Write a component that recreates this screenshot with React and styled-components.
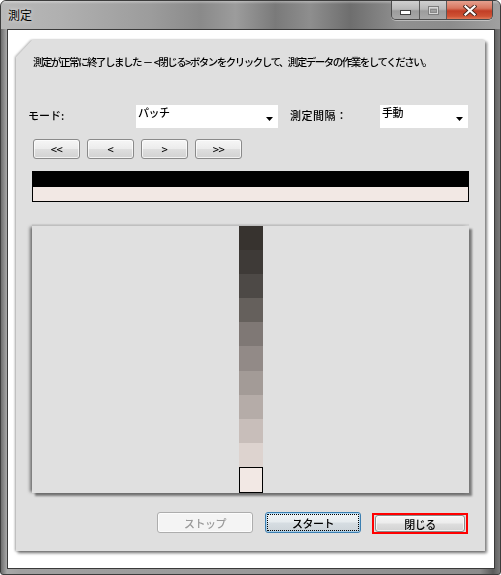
import React from 'react';
import styled, { createGlobalStyle, css } from 'styled-components';

const Global = createGlobalStyle`
  html, body { margin: 0; padding: 0; background: #fff; }
  body {
    width: 501px; height: 575px; overflow: hidden;
    font-family: "Noto Sans CJK JP", "Noto Sans", sans-serif;
    color: #000;
  }
  * { box-sizing: border-box; }
`;

const Window = styled.div`
  width: 501px;
  height: 575px;
  display: flex;
  flex-direction: column;
  border: 1px solid #3c3c3c;
  border-radius: 6px 6px 3px 3px;
  overflow: hidden;
  background: linear-gradient(90deg, #6e6e6e 0, #a9a9a9 1.2%, #a0a0a0 4%, #9a9a9a 50%, #8c8c8c 96%, #5a5a5a 98.6%, #7a7a7a 100%);
`;

const TitleBar = styled.div`
  height: 28px;
  flex: none;
  display: flex;
  align-items: flex-start;
  background:
    linear-gradient(180deg, rgba(255,255,255,0.35) 0, rgba(255,255,255,0) 3px),
    linear-gradient(90deg, #b9b9b9 0%, #b0b0b0 12%, #9c9c9c 30%, #8a8a8a 40%, #9c9c9c 47%, #7a7a7a 55%, #8e8e8e 62%, #6e6e6e 70%, #909090 80%, #8c8c8c 90%, #a0a0a0 100%);
`;

const Title = styled.div`
  padding: 6px 0 0 7px;
  font-size: 12px;
  line-height: 16px;
  color: #000;
  text-shadow: 0 0 4px rgba(255,255,255,0.8);
`;

const Controls = styled.div`
  margin-left: auto;
  margin-right: 7px;
  display: flex;
  height: 19px;
  border: 1px solid #4b4b4b;
  border-top: none;
  border-radius: 0 0 5px 5px;
  overflow: hidden;
  box-shadow: 0 1px 0 rgba(255,255,255,0.4);
`;

const CtrlBtn = styled.div`
  width: ${p => p.$w}px;
  height: 100%;
  display: flex;
  align-items: center;
  justify-content: center;
  border-left: ${p => (p.$first ? 'none' : '1px solid #5a5a5a')};
  ${p => p.$close
    ? css`background: linear-gradient(180deg, #e5a08f 0%, #d8765f 40%, #c23e26 55%, #cf5234 85%, #e07a5a 100%);`
    : css`background: linear-gradient(180deg, #d0d0d0 0%, #b8b8b8 45%, #9c9c9c 55%, #a8a8a8 100%);`}
`;

const Client = styled.div`
  flex: 1;
  margin: 0 5px 5px 6px;
  background: #fff;
  border: 1px solid #3a3a3a;
  display: flex;
  padding: 10px 9px 17px 8px;
`;

const PanelShadow = styled.div`
  flex: 1;
  display: flex;
  filter: drop-shadow(2px 2px 1.5px rgba(0,0,0,0.45)) drop-shadow(-1px 0 1px rgba(0,0,0,0.35));
`;

const Panel = styled.div`
  flex: 1;
  display: flex;
  flex-direction: column;
  background: #dfdfdf;
  clip-path: polygon(16px 0, 100% 0, 100% 100%, 0 100%, 0 17px);
`;

const Message = styled.div`
  margin: 15px 0 0 17px;
  height: 14px;
  font-size: 10.5px;
  font-weight: 500;
  line-height: 14px;
  letter-spacing: -1.5px;
  word-spacing: 1px;
  white-space: pre;
`;

const ModeRow = styled.div`
  margin: 36px 0 0 12px;
  display: flex;
  align-items: stretch;
  height: 23px;
`;

const Label = styled.div`
  width: ${p => p.$w}px;
  margin-left: ${p => p.$ml || 0}px;
  font-size: 11px;
  font-weight: 500;
  display: flex;
  align-items: center;
  padding-bottom: 3px;
  letter-spacing: ${p => p.$ls || 0}px;
`;

const Select = styled.div`
  width: ${p => p.$w}px;
  background: #fff;
  position: relative;
  font-size: 11px;
  font-weight: 500;
  line-height: 13px;
  padding: 1px 0 0 2px;
  letter-spacing: -0.5px;
`;

const Arrow = styled.svg`
  position: absolute;
  right: 5px;
  bottom: 7px;
`;

const NavRow = styled.div`
  margin: 11px 0 0 17px;
  display: flex;
  gap: 7px;
`;

const Button = styled.div`
  width: ${p => p.$w}px;
  height: ${p => p.$h || 20}px;
  display: flex;
  align-items: center;
  justify-content: center;
  border: 1px solid #8a8a8a;
  border-radius: 3px;
  font-size: 11px;
  font-weight: 500;
  letter-spacing: -0.5px;
  color: #000;
  background: linear-gradient(180deg, #f6f6f6 0%, #ececec 48%, #dedede 52%, #d2d2d2 100%);
  box-shadow: inset 0 0 0 1px rgba(255,255,255,0.7);
  ${p => p.$disabled && css`
    border-color: #adadad;
    background: #f4f4f4;
    color: #9a9a9a;
  `}
  ${p => p.$focused && css`
    border-color: #3c7fb1;
    background: linear-gradient(180deg, #f0f4f7 0%, #e6ebee 48%, #d6dde2 52%, #cdd4d9 100%);
    box-shadow: inset 0 0 0 1px rgba(140,200,240,0.6);
    outline: 1px dotted #000;
    outline-offset: -3px;
  `}
`;

const ColorBar = styled.div`
  margin: 12px 0 0 16px;
  width: 437px;
  display: flex;
  flex-direction: column;
`;

const BarTop = styled.div`
  height: 16px;
  background: #000;
`;

const BarBottom = styled.div`
  height: 15px;
  background: #f2e8e4;
  border: 1px solid #000;
  border-top: none;
`;

const Chart = styled.div`
  margin: 24px 0 0 16px;
  width: 437px;
  height: 267px;
  background: #e0e0e0;
  display: flex;
  justify-content: center;
  box-shadow: -3px 0 3px -1px rgba(0,0,0,0.5), 3px 3px 2px rgba(0,0,0,0.45), 0 -2px 1px rgba(0,0,0,0.06);
`;

const Column = styled.div`
  width: 24px;
  display: flex;
  flex-direction: column;
  margin-left: 1px;
`;

const Swatch = styled.div`
  flex: 1;
  background: ${p => p.$c};
  ${p => p.$outlined && css`border: 1px solid #000;`}
`;

const BottomRow = styled.div`
  margin: 19px 17px 0 0;
  display: flex;
  justify-content: flex-end;
  align-items: flex-start;
`;

const Spacer = styled.div`
  width: ${p => p.$w}px;
`;

const RedFrame = styled.div`
  border: 2px solid #ff0000;
  padding: 0 1px 0 1px;
  margin-top: 1px;
`;

const swatches = ['#37332f', '#3e3a37', '#4d4946', '#65605c', '#7f7875', '#928a87', '#a39b97', '#b5aca8', '#c8beba', '#ddd3cf', '#f2e8e4'];

export default function App() {
  return (
    <>
      <Global />
      <Window>
        <TitleBar>
          <Title>測定</Title>
          <Controls>
            <CtrlBtn $w={27} $first>
              <svg width="11" height="9" viewBox="0 0 11 9">
                <rect x="0.5" y="4.5" width="10" height="4" fill="#fff" stroke="#404040" />
              </svg>
            </CtrlBtn>
            <CtrlBtn $w={27}>
              <svg width="11" height="9" viewBox="0 0 11 9">
                <rect x="0.5" y="0.5" width="10" height="8" fill="none" stroke="#7e7e7e" />
                <rect x="1.5" y="1.5" width="8" height="6" fill="none" stroke="#d8d8d8" />
                <rect x="2.5" y="3.5" width="6" height="3" fill="none" stroke="#8a8a8a" />
              </svg>
            </CtrlBtn>
            <CtrlBtn $w={46} $close>
              <svg width="14" height="11" viewBox="0 0 14 11">
                <path d="M2.5 1.5 L11.5 9.5 M11.5 1.5 L2.5 9.5" stroke="#4a2a22" strokeWidth="4" strokeLinecap="square" />
                <path d="M2.5 1.5 L11.5 9.5 M11.5 1.5 L2.5 9.5" stroke="#fff" strokeWidth="2.2" strokeLinecap="square" />
              </svg>
            </CtrlBtn>
          </Controls>
        </TitleBar>
        <Client>
          <PanelShadow>
            <Panel>
              <Message>{'測定が正常に終了しました － <閉じる>ボタンをクリックして、測定データの作業をしてください。'}</Message>
              <ModeRow>
                <Label $w={108}>モード:</Label>
                <Select $w={142}>
                  パッチ
                  <Arrow width="7" height="4" viewBox="0 0 7 4"><polygon points="0,0 7,0 3.5,4" fill="#000" /></Arrow>
                </Select>
                <Label $w={90} $ml={12} $ls={0.5}>測定間隔：</Label>
                <Select $w={88}>
                  手動
                  <Arrow width="7" height="4" viewBox="0 0 7 4"><polygon points="0,0 7,0 3.5,4" fill="#000" /></Arrow>
                </Select>
              </ModeRow>
              <NavRow>
                <Button $w={47}>&lt;&lt;</Button>
                <Button $w={47}>&lt;</Button>
                <Button $w={47}>&gt;</Button>
                <Button $w={47}>&gt;&gt;</Button>
              </NavRow>
              <ColorBar>
                <BarTop />
                <BarBottom />
              </ColorBar>
              <Chart>
                <Column>
                  {swatches.map((c, i) => (
                    <Swatch key={i} $c={c} $outlined={i === swatches.length - 1} />
                  ))}
                </Column>
              </Chart>
              <BottomRow>
                <Button $w={96} $h={21} $disabled>ストップ</Button>
                <Spacer $w={12} />
                <Button $w={96} $h={21} $focused>スタート</Button>
                <Spacer $w={11} />
                <RedFrame>
                  <Button $w={90} $h={17}>閉じる</Button>
                </RedFrame>
              </BottomRow>
            </Panel>
          </PanelShadow>
        </Client>
      </Window>
    </>
  );
}
